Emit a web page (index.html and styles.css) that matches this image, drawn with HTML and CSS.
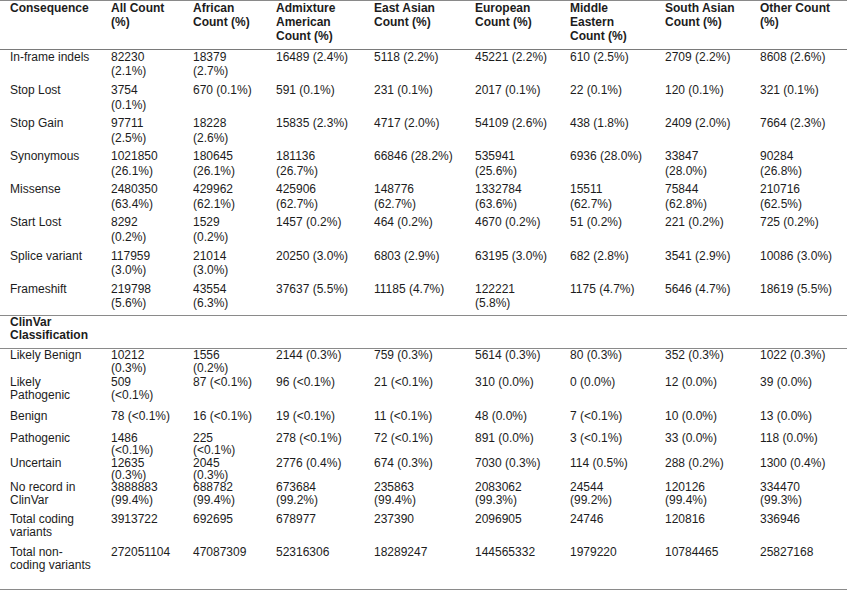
FILE: index.html
```html
<!DOCTYPE html>
<html>
<head>
<meta charset="utf-8">
<link rel="stylesheet" href="styles.css">
</head>
<body>
<div class="table">
  <div class="row head">
    <div class="c">Consequence</div>
    <div class="c">All Count (%)</div>
    <div class="c">African Count (%)</div>
    <div class="c">Admixture American Count (%)</div>
    <div class="c">East Asian Count (%)</div>
    <div class="c">European Count (%)</div>
    <div class="c">Middle Eastern Count (%)</div>
    <div class="c">South Asian Count (%)</div>
    <div class="c">Other Count (%)</div>
  </div>

  <div class="row conseq">
    <div class="c">In-frame indels</div><div class="c">82230 (2.1%)</div><div class="c">18379 (2.7%)</div><div class="c">16489 (2.4%)</div><div class="c">5118 (2.2%)</div><div class="c">45221 (2.2%)</div><div class="c">610 (2.5%)</div><div class="c">2709 (2.2%)</div><div class="c">8608 (2.6%)</div>
  </div>
  <div class="row conseq">
    <div class="c">Stop Lost</div><div class="c">3754 (0.1%)</div><div class="c">670 (0.1%)</div><div class="c">591 (0.1%)</div><div class="c">231 (0.1%)</div><div class="c">2017 (0.1%)</div><div class="c">22 (0.1%)</div><div class="c">120 (0.1%)</div><div class="c">321 (0.1%)</div>
  </div>
  <div class="row conseq">
    <div class="c">Stop Gain</div><div class="c">97711 (2.5%)</div><div class="c">18228 (2.6%)</div><div class="c">15835 (2.3%)</div><div class="c">4717 (2.0%)</div><div class="c">54109 (2.6%)</div><div class="c">438 (1.8%)</div><div class="c">2409 (2.0%)</div><div class="c">7664 (2.3%)</div>
  </div>
  <div class="row conseq">
    <div class="c">Synonymous</div><div class="c">1021850 (26.1%)</div><div class="c">180645 (26.1%)</div><div class="c">181136 (26.7%)</div><div class="c">66846 (28.2%)</div><div class="c">535941 (25.6%)</div><div class="c">6936 (28.0%)</div><div class="c">33847 (28.0%)</div><div class="c">90284 (26.8%)</div>
  </div>
  <div class="row conseq">
    <div class="c">Missense</div><div class="c">2480350 (63.4%)</div><div class="c">429962 (62.1%)</div><div class="c">425906 (62.7%)</div><div class="c">148776 (62.7%)</div><div class="c">1332784 (63.6%)</div><div class="c">15511 (62.7%)</div><div class="c">75844 (62.8%)</div><div class="c">210716 (62.5%)</div>
  </div>
  <div class="row conseq">
    <div class="c">Start Lost</div><div class="c">8292 (0.2%)</div><div class="c">1529 (0.2%)</div><div class="c">1457 (0.2%)</div><div class="c">464 (0.2%)</div><div class="c">4670 (0.2%)</div><div class="c">51 (0.2%)</div><div class="c">221 (0.2%)</div><div class="c">725 (0.2%)</div>
  </div>
  <div class="row conseq">
    <div class="c">Splice variant</div><div class="c">117959 (3.0%)</div><div class="c">21014 (3.0%)</div><div class="c">20250 (3.0%)</div><div class="c">6803 (2.9%)</div><div class="c">63195 (3.0%)</div><div class="c">682 (2.8%)</div><div class="c">3541 (2.9%)</div><div class="c">10086 (3.0%)</div>
  </div>
  <div class="row conseq last">
    <div class="c">Frameshift</div><div class="c">219798 (5.6%)</div><div class="c">43554 (6.3%)</div><div class="c">37637 (5.5%)</div><div class="c">11185 (4.7%)</div><div class="c">122221 (5.8%)</div><div class="c">1175 (4.7%)</div><div class="c">5646 (4.7%)</div><div class="c">18619 (5.5%)</div>
  </div>

  <div class="row section">
    <div class="c">ClinVar Classification</div>
  </div>

  <div class="row clin h27">
    <div class="c">Likely Benign</div><div class="c">10212 (0.3%)</div><div class="c">1556 (0.2%)</div><div class="c">2144 (0.3%)</div><div class="c">759 (0.3%)</div><div class="c">5614 (0.3%)</div><div class="c">80 (0.3%)</div><div class="c">352 (0.3%)</div><div class="c">1022 (0.3%)</div>
  </div>
  <div class="row clin h34">
    <div class="c">Likely Pathogenic</div><div class="c">509 (&lt;0.1%)</div><div class="c">87 (&lt;0.1%)</div><div class="c">96 (&lt;0.1%)</div><div class="c">21 (&lt;0.1%)</div><div class="c">310 (0.0%)</div><div class="c">0 (0.0%)</div><div class="c">12 (0.0%)</div><div class="c">39 (0.0%)</div>
  </div>
  <div class="row clin h22">
    <div class="c">Benign</div><div class="c">78 (&lt;0.1%)</div><div class="c">16 (&lt;0.1%)</div><div class="c">19 (&lt;0.1%)</div><div class="c">11 (&lt;0.1%)</div><div class="c">48 (0.0%)</div><div class="c">7 (&lt;0.1%)</div><div class="c">10 (0.0%)</div><div class="c">13 (0.0%)</div>
  </div>
  <div class="row clin tight h25">
    <div class="c">Pathogenic</div><div class="c">1486 (&lt;0.1%)</div><div class="c">225 (&lt;0.1%)</div><div class="c">278 (&lt;0.1%)</div><div class="c">72 (&lt;0.1%)</div><div class="c">891 (0.0%)</div><div class="c">3 (&lt;0.1%)</div><div class="c">33 (0.0%)</div><div class="c">118 (0.0%)</div>
  </div>
  <div class="row clin tight h24">
    <div class="c">Uncertain</div><div class="c">12635 (0.3%)</div><div class="c">2045 (0.3%)</div><div class="c">2776 (0.4%)</div><div class="c">674 (0.3%)</div><div class="c">7030 (0.3%)</div><div class="c">114 (0.5%)</div><div class="c">288 (0.2%)</div><div class="c">1300 (0.4%)</div>
  </div>
  <div class="row clin h32">
    <div class="c">No record in ClinVar</div><div class="c">3888883 (99.4%)</div><div class="c">688782 (99.4%)</div><div class="c">673684 (99.2%)</div><div class="c">235863 (99.4%)</div><div class="c">2083062 (99.3%)</div><div class="c">24544 (99.2%)</div><div class="c">120126 (99.4%)</div><div class="c">334470 (99.3%)</div>
  </div>
  <div class="row clin h33">
    <div class="c">Total coding variants</div><div class="c">3913722</div><div class="c">692695</div><div class="c">678977</div><div class="c">237390</div><div class="c">2096905</div><div class="c">24746</div><div class="c">120816</div><div class="c">336946</div>
  </div>
  <div class="row clin h43">
    <div class="c">Total non-coding variants</div><div class="c">272051104</div><div class="c">47087309</div><div class="c">52316306</div><div class="c">18289247</div><div class="c">144565332</div><div class="c">1979220</div><div class="c">10784465</div><div class="c">25827168</div>
  </div>
</div>
</body>
</html>
```

FILE: styles.css
```css
html, body {
  margin: 0;
  padding: 0;
  background: #ffffff;
}

body {
  font-family: "Liberation Sans", Arial, sans-serif;
  font-size: 12px;
  color: #1c1c1c;
}

.table {
  width: 847px;
  border-top: 1px solid #8a8a8a;
  border-bottom: 1px solid #8a8a8a;
}

.row {
  display: grid;
  grid-template-columns: 111px 82px 83px 98px 101px 95px 95px 95px 87px;
  align-items: start;
}

.c {
  padding-right: 20px;
  box-sizing: border-box;
}

.c:nth-child(1) { padding-left: 10px; padding-right: 16px; }
.c:nth-child(3) { padding-right: 21px; }
.c:nth-child(5) { padding-right: 19px; }
.c:nth-child(9) { padding-right: 12px; }

.head {
  height: 48px;
  line-height: 14.2px;
  font-weight: bold;
  border-bottom: 1px solid #7a7a7a;
}

.conseq {
  height: 33.1px;
  line-height: 14.4px;
}

.conseq.last {
  border-bottom: 1px solid #8a8a8a;
}

.section {
  height: 32px;
  line-height: 13.4px;
  font-weight: bold;
  border-bottom: 1px solid #8a8a8a;
}

.section .c {
  grid-column: 1 / 2;
}

.clin {
  line-height: 13.2px;
}

.clin.tight {
  line-height: 12px;
}

.h22 { height: 22px; }
.h24 { height: 24px; }
.h25 { height: 25px; }
.h27 { height: 27px; }
.h32 { height: 32px; }
.h33 { height: 33px; }
.h34 { height: 34px; }
.h43 { height: 43px; }
```
